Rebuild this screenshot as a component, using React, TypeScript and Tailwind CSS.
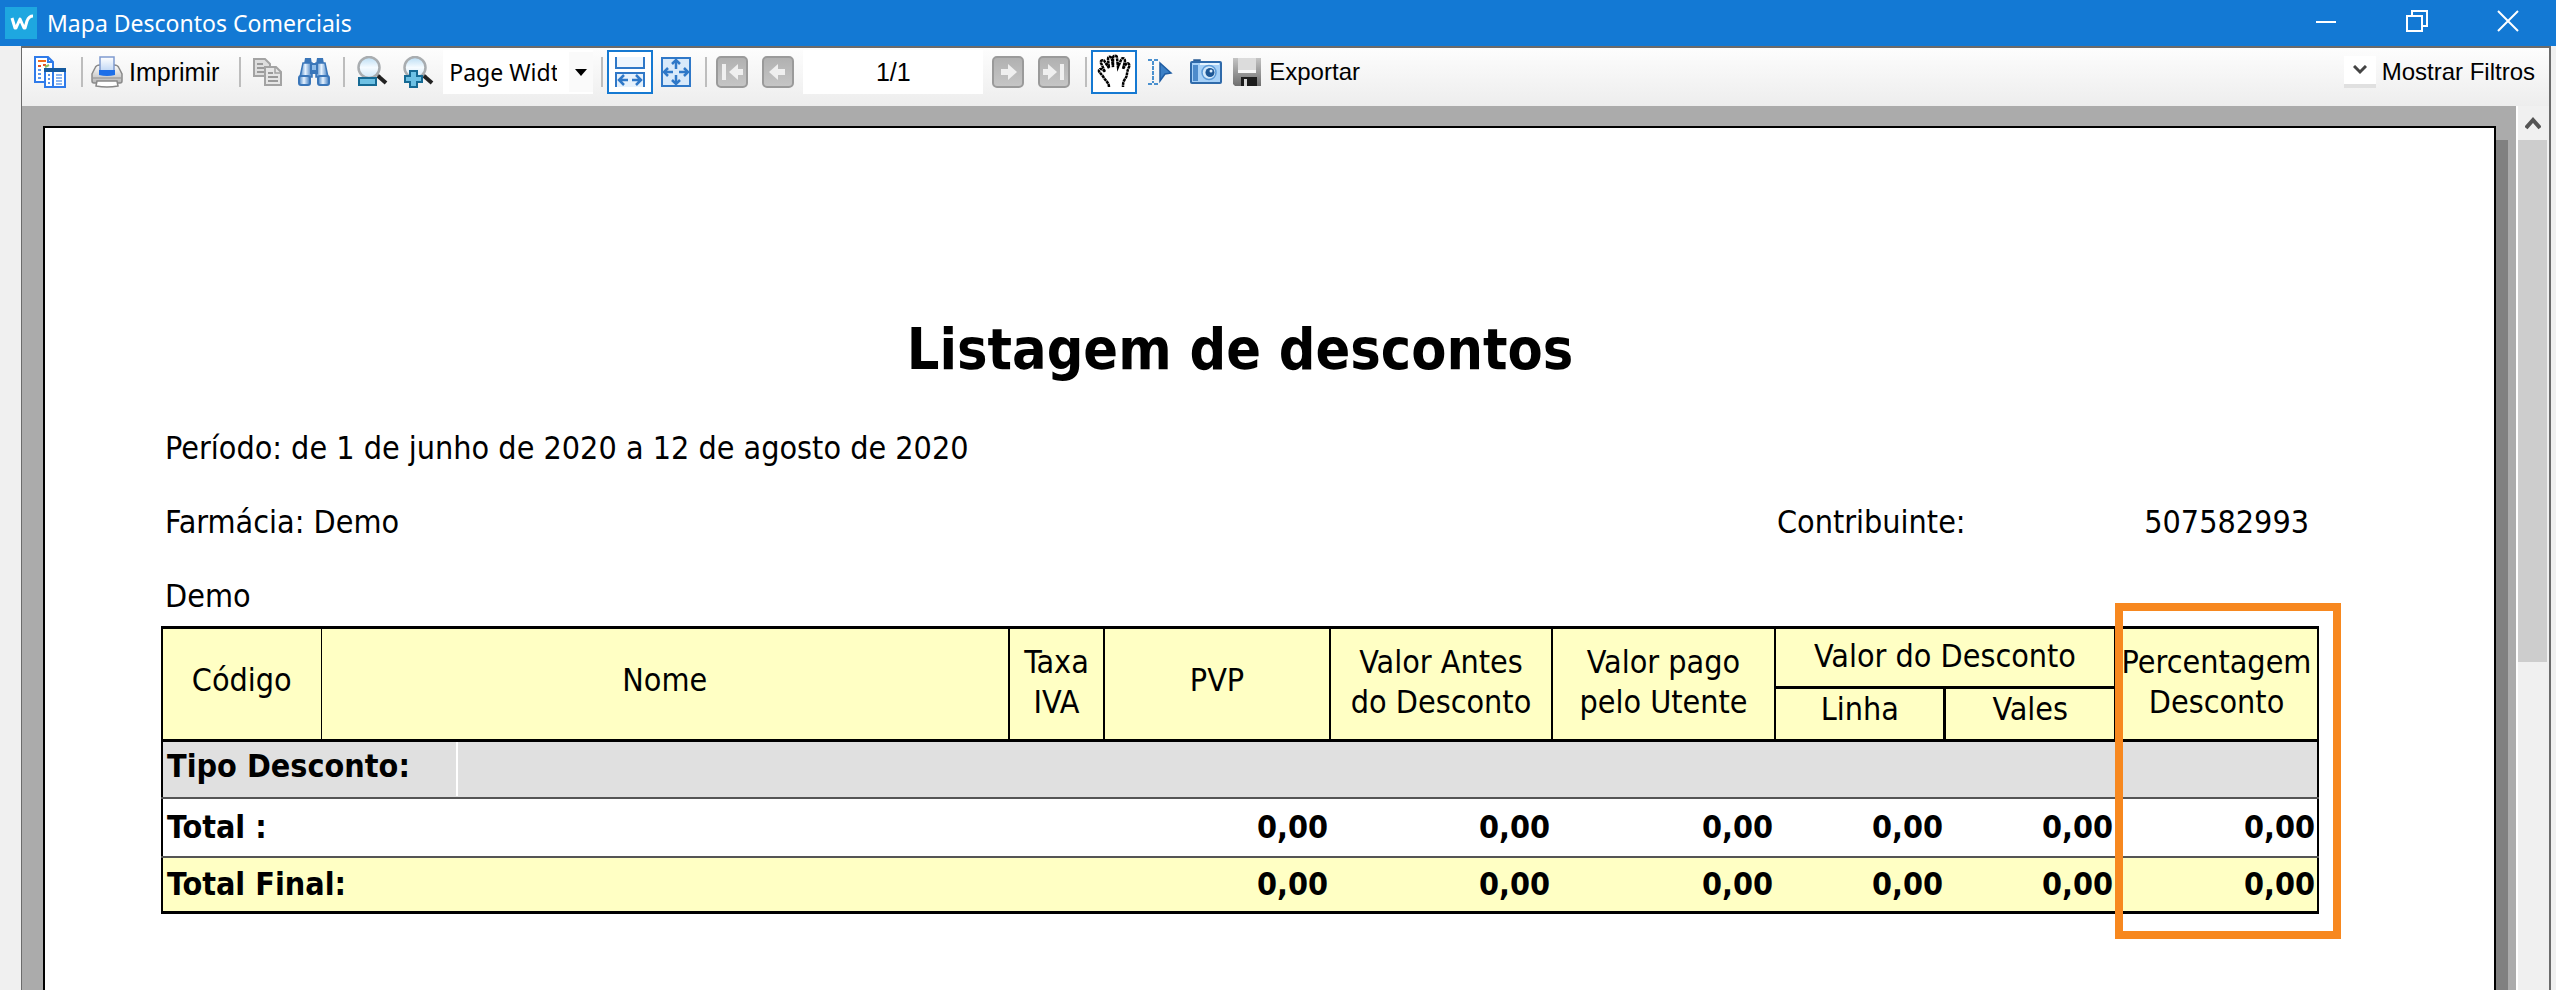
import type { ReactNode } from "react";

const columns = ["PVP", "Valor Antes do Desconto", "Valor pago pelo Utente", "Linha", "Vales", "Percentagem Desconto"];

function Separator() {
  return <span className="h-[30px] w-0.5 shrink-0 bg-[#bdbdbd]" />;
}

function ToolButton({ label, active, children }: { label: string; active?: boolean; children: ReactNode }) {
  return (
    <button
      type="button"
      aria-label={label}
      className={
        active
          ? "flex h-11 w-[46px] shrink-0 items-center justify-center border-2 border-[#1579d2] bg-white"
          : "flex h-11 w-[46px] shrink-0 items-center justify-center"
      }
    >
      {children}
    </button>
  );
}

function ReportIcon() {
  return (
    <svg width="32" height="32" viewBox="0 0 32 32" fill="none">
      <path d="M1 1h13l5 5v20H1z" fill="#fff" stroke="#2f7bea" strokeWidth="2" />
      <path d="M14 1v5h5" stroke="#2f7bea" strokeWidth="2" />
      <path d="M4 5h8" stroke="#ef6a1f" strokeWidth="2" />
      <path d="M4 10h3M9 9h3" stroke="#e2552b" strokeWidth="2" />
      <path d="M4 14h3M4 18h3M4 22h3" stroke="#5b95ea" strokeWidth="2" />
      <path d="M11 11l4-2" stroke="#8cc36a" strokeWidth="2" />
      <rect x="11" y="13" width="20" height="18" fill="#fff" stroke="#2f7bea" strokeWidth="2" />
      <path d="M10 12h22v4H10z" fill="#155a9e" />
      <path d="M19 16v15" stroke="#2f7bea" strokeWidth="2" />
      <path d="M14 19h3M14 23h3M14 27h3" stroke="#5b95ea" strokeWidth="2" strokeDasharray="2 1" />
      <path d="M22 19h6M22 22h6M22 25h6M22 28h6" stroke="#6aa0ec" strokeWidth="1.5" />
    </svg>
  );
}

function PrinterIcon() {
  return (
    <svg width="32" height="32" viewBox="0 0 32 32" fill="none">
      <defs>
        <linearGradient id="printer-body" x1="0" y1="0" x2="0" y2="1">
          <stop offset="0" stopColor="#fdfdfd" />
          <stop offset="1" stopColor="#b5b5b5" />
        </linearGradient>
        <linearGradient id="printer-paper" x1="0" y1="0" x2="0" y2="1">
          <stop offset="0" stopColor="#ffffff" />
          <stop offset="1" stopColor="#bcd4f4" />
        </linearGradient>
      </defs>
      <path d="M4 12q1-3 5-3h14q4 0 5 3l3 6v7q0 2-2 2H3q-2 0-2-2v-7z" fill="url(#printer-body)" stroke="#8a8a8a" strokeWidth="1.5" />
      <path d="M9 1h14v15H9z" fill="url(#printer-paper)" stroke="#7f9bd0" strokeWidth="1.5" />
      <path d="M8 14h16v5q-8 2-16 0z" fill="#1d6fe8" />
      <path d="M2 22h28" stroke="#a0a0a0" strokeWidth="1.5" />
      <path d="M6 25h20l1 5q-11 2-22 0z" fill="#fff" stroke="#888" strokeWidth="1.5" />
    </svg>
  );
}

function CopyIcon() {
  return (
    <svg width="30" height="30" viewBox="0 0 30 30" fill="none">
      <path d="M1 2h11l5 5v12H1z" fill="#dedede" stroke="#a3a3a3" strokeWidth="2" />
      <path d="M4 7h6M4 11h9M4 15h9" stroke="#9a9a9a" strokeWidth="2" />
      <path d="M12 10h11l5 5v13H12z" fill="#e6e6e6" stroke="#a3a3a3" strokeWidth="2" />
      <path d="M22 10v6h6" stroke="#a3a3a3" strokeWidth="1.5" />
      <path d="M15 16h5M15 20h10M15 24h10" stroke="#9a9a9a" strokeWidth="2" />
    </svg>
  );
}

function BinocularsIcon() {
  return (
    <svg width="32" height="30" viewBox="0 0 32 30" fill="none">
      <defs>
        <linearGradient id="binoculars" x1="0" y1="0" x2="1" y2="0">
          <stop offset="0" stopColor="#3f7ec2" />
          <stop offset="0.45" stopColor="#e7f3ff" />
          <stop offset="1" stopColor="#3b78bd" />
        </linearGradient>
      </defs>
      <path d="M7 1h6l1 6H6zM19 1h6l1 6h-8z" fill="#3a76b9" />
      <path d="M5 6h9v14H2z" fill="url(#binoculars)" stroke="#3a76b9" strokeWidth="1.5" />
      <path d="M18 6h9l3 14H18z" fill="url(#binoculars)" stroke="#3a76b9" strokeWidth="1.5" />
      <path d="M12 6h8v11h-8z" fill="#3a76b9" />
      <path d="M14 8h4v5h-4z" fill="#8fbce8" />
      <rect x="1" y="19" width="11" height="9" rx="2" fill="url(#binoculars)" stroke="#3a76b9" strokeWidth="2" />
      <rect x="20" y="19" width="11" height="9" rx="2" fill="url(#binoculars)" stroke="#3a76b9" strokeWidth="2" />
    </svg>
  );
}

function MagnifierIcon({ plus }: { plus?: boolean }) {
  const id = plus ? "lens-in" : "lens-out";
  return (
    <svg width="32" height="32" viewBox="0 0 32 32" fill="none">
      <defs>
        <linearGradient id={id} x1="0" y1="0" x2="0" y2="1">
          <stop offset="0" stopColor="#b9dcf3" />
          <stop offset="0.5" stopColor="#f5fbff" />
          <stop offset="1" stopColor="#cfe6f6" />
        </linearGradient>
      </defs>
      <path d="M20 18l4 3" stroke="#777" strokeWidth="3" />
      <path d="M22 20l8 7" stroke="#222" strokeWidth="4" />
      <circle cx="13" cy="11.5" r="10.5" fill={`url(#${id})`} stroke="#a9adb0" strokeWidth="2.5" />
      {plus ? (
        <path d="M8 15h7v5h5v6h-5v5H8v-5H3v-6h5z" fill="#6ec1e4" stroke="#166a94" strokeWidth="2" />
      ) : (
        <rect x="3" y="22" width="17" height="7" fill="#6ec1e4" stroke="#166a94" strokeWidth="2" />
      )}
    </svg>
  );
}

function PageWidthIcon() {
  return (
    <svg width="32" height="32" viewBox="0 0 32 32" fill="none" stroke="#2f78c8">
      <path d="M2 1v11h28V1" fill="#eef6fe" strokeWidth="2" />
      <path d="M2 31V17h28v14" fill="#e6f1fc" strokeWidth="2" />
      <path d="M6 24h8M26 24h-8M10 19l-5 5 5 5M22 19l5 5-5 5" strokeWidth="2.5" />
    </svg>
  );
}

function FitPageIcon() {
  return (
    <svg width="32" height="32" viewBox="0 0 32 32" fill="none" stroke="#2f78c8">
      <rect x="2" y="2" width="28" height="28" fill="#d8e9fa" strokeWidth="2" />
      <path d="M16 5v8M16 19v8M5 16h8M19 16h8" strokeWidth="2.5" />
      <path d="M12 8l4-4 4 4M12 24l4 4 4-4M8 12l-4 4 4 4M24 12l4 4-4 4" strokeWidth="2.5" />
    </svg>
  );
}

function NavIcon({ direction, end }: { direction: "left" | "right"; end?: boolean }) {
  const arrow = end ? "M13 16l9-8v5h5v6h-5v5z" : "M7 16l9-8v5h7v6h-7v5z";
  const id = `nav-${direction}-${end ? "end" : "step"}`;
  return (
    <svg width="32" height="32" viewBox="0 0 32 32" fill="none">
      <defs>
        <linearGradient id={id} x1="0" y1="0" x2="0" y2="1">
          <stop offset="0" stopColor="#b0b0b0" />
          <stop offset="1" stopColor="#c6c6c6" />
        </linearGradient>
      </defs>
      <rect x="1" y="1" width="30" height="30" rx="4" fill={`url(#${id})`} stroke="#9a9a9a" strokeWidth="2" />
      <g transform={direction === "right" ? "matrix(-1 0 0 1 32 0)" : undefined} fill="#efefef">
        <path d={arrow} />
        {end && <rect x="6" y="8" width="4" height="16" />}
      </g>
    </svg>
  );
}

function HandIcon() {
  return (
    <svg width="36" height="36" viewBox="0 0 36 36" fill="none">
      <path
        d="M13 33c0-4-3-6-5-9-2-4-6-6-5-8s4-1 6 2L5 9c-1-3 3-4 4-1l4 6-1-9c0-3 3-3 4 0l1 8V4c0-3 4-3 4 0l1 9 3-7c1-3 4-2 4 1l-2 8 3-5c2-2 4 0 3 3-3 6-1 8-4 12-2 3-2 5-2 8"
        fill="#fff"
        stroke="#000"
        strokeWidth="2.5"
        strokeDasharray="3 0.5"
      />
    </svg>
  );
}

function TextCursorIcon() {
  return (
    <svg width="26" height="26" viewBox="0 0 26 26" fill="none">
      <path d="M1 1h4M7 1h4M1 25h4M7 25h4M6 2v22" stroke="#4a90cf" strokeWidth="2" strokeDasharray="4 1" />
      <path d="M13 4l11 10-6 1-5 7z" fill="#3c80c6" stroke="#1f5da3" strokeWidth="1.5" />
    </svg>
  );
}

function CameraIcon() {
  return (
    <svg width="32" height="26" viewBox="0 0 32 26" fill="none">
      <path d="M4 3V1h6v2" fill="#2c5f97" stroke="#2c5f97" strokeWidth="1.5" />
      <rect x="1" y="3" width="30" height="21" rx="1" fill="#a6d0f7" stroke="#2f6aaa" strokeWidth="2" />
      <path d="M3 6h5v16H3z" fill="#4d8bcb" />
      <path d="M10 5h19" stroke="#e6f4ff" strokeWidth="2" />
      <circle cx="19" cy="13.5" r="7" fill="#d3e9fb" stroke="#5d9bd8" strokeWidth="1.5" />
      <circle cx="20" cy="13.5" r="4.5" fill="#1e5795" />
      <circle cx="21" cy="12" r="1.5" fill="#dff0ff" />
    </svg>
  );
}

function FloppyIcon() {
  return (
    <svg width="28" height="28" viewBox="0 0 28 28" fill="none">
      <defs>
        <linearGradient id="floppy" x1="0" y1="0" x2="0" y2="1">
          <stop offset="0" stopColor="#c4c4c4" />
          <stop offset="1" stopColor="#6f6f6f" />
        </linearGradient>
      </defs>
      <path d="M0 0h28v28H2l-2-2z" fill="url(#floppy)" />
      <path d="M5 0h18v13H5z" fill="#dcdcdc" />
      <path d="M5 12h18v3H5z" fill="#f8f8f8" />
      <path d="M8 19h16v9H8z" fill="#1c1c1c" />
      <path d="M11 21h3v7h-3z" fill="#d6d6d6" />
    </svg>
  );
}

function TitleBar() {
  return (
    <header className="flex h-[46px] shrink-0 items-center bg-[#1379d4] pl-[5px] text-white">
      <svg width="32" height="32" viewBox="0 0 32 32" fill="none">
        <rect width="32" height="32" fill="#1ea7e0" />
        <path d="M7 11l3 10h1l4-9 4 9h1l2-7q2-5 6-5" stroke="#fff" strokeWidth="3" strokeLinejoin="round" />
      </svg>
      <h1 className="ml-2.5 flex-1 font-['Noto_Sans',sans-serif] text-[23px] leading-8">Mapa Descontos Comerciais</h1>
      <button type="button" aria-label="Minimizar" className="flex h-full w-[92px] items-center justify-center pb-1">
        <svg width="22" height="22" viewBox="0 0 22 22" fill="none" stroke="#fff" strokeWidth="2">
          <path d="M1 12h20" />
        </svg>
      </button>
      <button type="button" aria-label="Restaurar" className="flex h-full w-[90px] items-center justify-center pb-1">
        <svg width="22" height="22" viewBox="0 0 22 22" fill="none" stroke="#fff" strokeWidth="2">
          <path d="M1 6h15v15H1zM6 6V1h15v15h-5" />
        </svg>
      </button>
      <button type="button" aria-label="Fechar" className="mr-0.5 flex h-full w-[92px] items-center justify-center pb-1">
        <svg width="22" height="22" viewBox="0 0 22 22" fill="none" stroke="#fff" strokeWidth="2">
          <path d="M1 1l20 20M21 1L1 21" />
        </svg>
      </button>
    </header>
  );
}

function Toolbar() {
  return (
    <div
      role="toolbar"
      aria-label="Relatório"
      className="flex h-[58px] shrink-0 items-start bg-linear-to-b from-[#fdfdfd] to-[#ededed] pt-0.5 pl-[5px] text-[25px] leading-8"
    >
      <div className="flex h-11 flex-1 items-center">
        <ToolButton label="Mapa do documento"><ReportIcon /></ToolButton>
        <span className="w-2" />
        <Separator />
        <button type="button" className="flex h-11 items-center gap-1.5 px-2">
          <PrinterIcon />
          Imprimir
        </button>
        <span className="w-3" />
        <Separator />
        <span className="w-1" />
        <ToolButton label="Copiar"><CopyIcon /></ToolButton>
        <ToolButton label="Procurar"><BinocularsIcon /></ToolButton>
        <span className="w-1.5" />
        <Separator />
        <span className="w-1" />
        <ToolButton label="Reduzir"><MagnifierIcon /></ToolButton>
        <ToolButton label="Ampliar"><MagnifierIcon plus /></ToolButton>
        <div className="relative ml-0.5 h-11 w-[150px]">
          <select
            aria-label="Zoom"
            className="h-full w-full appearance-none bg-white pr-9 pl-1.5 font-['Noto_Sans',sans-serif] text-[23px] outline-none"
          >
            <option>Page Width</option>
            <option>100%</option>
          </select>
          <span className="pointer-events-none absolute inset-y-0.5 right-0 flex w-6 items-center justify-center bg-[#fafafa]">
            <svg width="12" height="7" viewBox="0 0 12 7"><path d="M0 0h12L6 7z" fill="#000" /></svg>
          </span>
        </div>
        <span className="w-2" />
        <Separator />
        <span className="w-1" />
        <ToolButton label="Largura da página" active><PageWidthIcon /></ToolButton>
        <ToolButton label="Página inteira"><FitPageIcon /></ToolButton>
        <span className="w-1.5" />
        <Separator />
        <span className="w-0.5" />
        <ToolButton label="Primeira página"><NavIcon direction="left" end /></ToolButton>
        <ToolButton label="Página anterior"><NavIcon direction="left" /></ToolButton>
        <input aria-label="Página" defaultValue="1/1" className="mx-0.5 h-11 w-[180px] bg-white text-center outline-none" />
        <ToolButton label="Página seguinte"><NavIcon direction="right" /></ToolButton>
        <ToolButton label="Última página"><NavIcon direction="right" end /></ToolButton>
        <span className="w-2" />
        <Separator />
        <span className="w-1" />
        <ToolButton label="Mover" active><HandIcon /></ToolButton>
        <ToolButton label="Selecionar texto"><TextCursorIcon /></ToolButton>
        <ToolButton label="Instantâneo"><CameraIcon /></ToolButton>
        <button type="button" className="ml-1 flex h-11 items-center gap-2 text-2xl">
          <FloppyIcon />
          Exportar
        </button>
      </div>
      <button type="button" className="flex h-11 items-center gap-1.5 pr-3.5 text-2xl">
        <span className="flex h-8 w-8 items-center justify-center border-b-4 border-[#e0e0e0] bg-white">
          <svg width="14" height="10" viewBox="0 0 14 10" fill="none" stroke="#444" strokeWidth="3"><path d="M1 1l6 6 6-6" /></svg>
        </span>
        Mostrar Filtros
      </button>
    </div>
  );
}

function TotalRow({ label, tone, values }: { label: string; tone: string; values: string[] }) {
  return (
    <tr className={tone}>
      <th scope="row" colSpan={3} className="px-1 py-0 text-left font-bold">{label}</th>
      {values.map((value, i) => (
        <td key={columns[i]} className="px-0.5 py-0 text-right font-bold">{value}</td>
      ))}
    </tr>
  );
}

function DiscountTable() {
  const zeros = columns.map(() => "0,00");
  return (
    <div className="relative mt-2.5">
      <table className="w-full table-fixed border-collapse border-2 border-t-3 border-b-3 border-black leading-10">
        <colgroup>
          <col className="w-[159px]" />
          <col />
          <col className="w-[95px]" />
          <col className="w-[226px]" />
          <col className="w-[222px]" />
          <col className="w-[223px]" />
          <col className="w-[170px]" />
          <col className="w-[170px]" />
          <col className="w-[203px]" />
        </colgroup>
        <thead className="border-b-3 border-black bg-[#ffffc4] [&_th]:border-black [&_th]:p-0 [&_th]:font-normal">
          <tr className="h-[60px]">
            <th rowSpan={2} className="border-r"><span className="block pb-2">Código</span></th>
            <th rowSpan={2} className="border-r-2"><span className="block pb-2">Nome</span></th>
            <th rowSpan={2} className="border-r-2"><span className="block pb-1">Taxa<br />IVA</span></th>
            <th rowSpan={2} className="border-r-2"><span className="block pb-2">PVP</span></th>
            <th rowSpan={2} className="border-r-2"><span className="block pb-1">Valor Antes<br />do Desconto</span></th>
            <th rowSpan={2} className="border-r-2"><span className="block pb-1">Valor pago<br />pelo Utente</span></th>
            <th colSpan={2} className="border-r-2 border-b-3"><span className="block pb-1">Valor do Desconto</span></th>
            <th rowSpan={2}><span className="block pb-1">Percentagem<br />Desconto</span></th>
          </tr>
          <tr className="h-[53px]">
            <th className="border-r-3 align-top">Linha</th>
            <th className="border-r-2 align-top">Vales</th>
          </tr>
        </thead>
        <tbody>
          <tr className="h-[57px] bg-[#e0e0e0]">
            <th scope="row" colSpan={9} className="p-0 text-left font-bold">
              <span className="flex h-[54px] w-[295px] border-r-2 border-white pt-1 pl-1">
                Tipo Desconto:
              </span>
            </th>
          </tr>
          <TotalRow label="Total :" tone="h-[59px] border-y-2 border-[#555]" values={zeros} />
          <TotalRow label="Total Final:" tone="h-14 bg-[#ffffc4]" values={zeros} />
        </tbody>
      </table>
      <div className="pointer-events-none absolute -top-[23px] -right-[22px] -bottom-[25px] w-[226px] border-8 border-[#f7881f]" />
    </div>
  );
}

function ReportPage() {
  return (
    <article className="flex-1 border-2 border-b-0 border-black bg-white pt-[186px] pr-[175px] pb-10 pl-[116px] font-['DejaVu_Sans_Condensed','DejaVu_Sans',sans-serif] text-[32px] text-black">
      <h2 className="text-center text-[57px] leading-[70px] font-bold">Listagem de descontos</h2>
      <div className="mt-11 flex flex-col gap-[34px] pl-1 leading-10">
        <p>Período: de 1 de junho de 2020 a 12 de agosto de 2020</p>
        <div className="flex">
          <p className="flex-1">Farmácia: Demo</p>
          <p className="w-[300px]">Contribuinte:</p>
          <p className="w-[242px] pr-2.5 text-right">507582993</p>
        </div>
        <p>Demo</p>
      </div>
      <DiscountTable />
    </article>
  );
}

export default function App() {
  return (
    <div className="flex h-screen flex-col overflow-hidden bg-[#f0f0f0] font-['Liberation_Sans',Arial,sans-serif] text-black">
      <TitleBar />
      <main className="mr-[5px] ml-[21px] flex min-h-0 flex-1 flex-col border-2 border-b-0 border-l-1 border-[#6b6b6b]">
        <Toolbar />
        <div className="flex min-h-0 flex-1">
          <section className="flex min-w-0 flex-1 overflow-hidden bg-[#ababab] pt-5 pl-[21px]">
            <ReportPage />
            <div className="mt-3.5 mr-2 w-3 bg-[#808080]" />
          </section>
          <div className="flex w-[33px] flex-col border-l-2 border-white bg-[#f0f0f0] pr-0.5">
            <button type="button" aria-label="Deslocar para cima" className="flex h-[34px] items-center justify-center">
              <svg width="16" height="14" viewBox="0 0 16 14" fill="none" stroke="#555" strokeWidth="4"><path d="M1 12l7-8 7 8" /></svg>
            </button>
            <div className="h-[522px] bg-[#cdcdcd]" />
          </div>
        </div>
      </main>
    </div>
  );
}
